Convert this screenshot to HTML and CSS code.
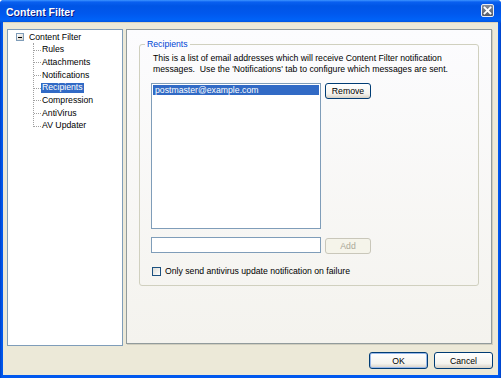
FILE: index.html
```html
<!DOCTYPE html>
<html lang="en">

<head>
    <meta charset="UTF-8">
    <title>Content Filter</title>
    <link rel="stylesheet" href="styles.css">
</head>

<body>
    <div class="window">
        <div class="titlebar">
            <span class="title">Content Filter</span>
            <span class="close">
                <svg width="13" height="13" viewBox="0 0 13 13">
                    <path d="M3.5 3.5 L9.5 9.5 M9.5 3.5 L3.5 9.5" stroke="#fff" stroke-width="1.8" stroke-linecap="square" fill="none"/>
                </svg>
            </span>
        </div>

        <div class="client">
            <div class="main">
                <ul class="tree">
                    <li class="root">
                        <div class="row"><span class="expander"></span><span class="label">Content Filter</span></div>
                        <ul class="children">
                            <li><span class="label">Rules</span></li>
                            <li><span class="label">Attachments</span></li>
                            <li><span class="label">Notifications</span></li>
                            <li><span class="label selected">Recipients</span></li>
                            <li><span class="label">Compression</span></li>
                            <li><span class="label">AntiVirus</span></li>
                            <li><span class="label">AV Updater</span></li>
                        </ul>
                    </li>
                </ul>

                <div class="page">
                    <fieldset class="group">
                        <legend>Recipients</legend>
                        <p class="desc">This is a list of email addresses which will receive Content Filter notification<br>messages.&nbsp; Use the 'Notifications' tab to configure which messages are sent.</p>

                        <div class="list-row">
                            <div class="listbox">
                                <div class="item selected">postmaster@example.com</div>
                            </div>
                            <button class="btn">Remove</button>
                        </div>

                        <div class="add-row">
                            <input class="field" type="text">
                            <button class="btn" disabled>Add</button>
                        </div>

                        <label class="check"><span class="box"></span>Only send antivirus update notification on failure</label>
                    </fieldset>
                </div>
            </div>

            <div class="footer">
                <button class="btn default">OK</button>
                <button class="btn">Cancel</button>
            </div>
        </div>
    </div>
</body>

</html>
```

FILE: styles.css
```css
body {
    margin: 0;
    width: 501px;
    height: 378px;
    overflow: hidden;
    background-color: #fff;
    font-family: "Liberation Sans", Arial, sans-serif;
    font-size: 8.7px;
    color: #000;
}

.window {
    height: 378px;
    display: flex;
    flex-direction: column;
    background: linear-gradient(to right, #0041c6, #0058ee 2px, #0058ee 499px, #0041c6);
    border-radius: 4px 4px 0 0;
}

/* title bar */
.titlebar {
    height: 23px;
    flex: none;
    box-sizing: border-box;
    display: flex;
    align-items: flex-start;
    justify-content: space-between;
    padding: 4px 7px 0 6px;
    border-radius: 4px 4px 0 0;
    background: linear-gradient(to bottom, #3d95ff 0, #0a60f0 2px, #0055e5 6px, #0058ee 60%, #0062f7 85%, #0050d8 100%);
}

.title {
    margin-top: 2px;
    color: #fff;
    font-weight: bold;
    font-size: 10.5px;
    line-height: 13px;
    text-shadow: 1px 1px 0 #0a1883;
}

.close {
    width: 13px;
    height: 13px;
    box-sizing: border-box;
    display: flex;
    align-items: center;
    justify-content: center;
    border: 1px solid #e8ecf5;
    border-radius: 2px;
    background: linear-gradient(to bottom, #858c99, #545b69);
}

.close svg {
    display: block;
    margin: -1px;
}

/* client area */
.client {
    flex: 1;
    margin: -1px 3px 3px;
    padding: 6px 5px 0 4px;
    background-color: #ece9d8;
    border-top: 1px solid #d8d2bd;
}

.main {
    display: flex;
    align-items: flex-start;
    gap: 3px;
}

/* tree */
.tree {
    list-style: none;
    margin: 0;
    width: 116px;
    height: 317px;
    box-sizing: border-box;
    padding: 1px 0 0 8px;
    background-color: #fff;
    border: 1px solid #7f9db9;
}

.tree ul {
    list-style: none;
    margin: 0;
}

.row,
.children li {
    height: 12.7px;
    display: flex;
    align-items: center;
    white-space: nowrap;
}

.expander {
    width: 8px;
    height: 8px;
    box-sizing: border-box;
    margin-right: 4px;
    border: 1px solid #7f9db9;
    background: linear-gradient(to bottom right, #fff, #d4d0c8);
    display: flex;
    align-items: center;
    justify-content: center;
}

.expander::after {
    content: "";
    width: 4px;
    height: 1px;
    background-color: #000;
}

.label {
    padding: 0 1px;
    line-height: 9.5px;
}

.label.selected {
    background-color: #316ac5;
    color: #fff;
}

.children {
    position: relative;
    padding: 0 0 0 17px;
}

.children::before {
    content: "";
    position: absolute;
    left: 17px;
    top: -1px;
    bottom: 6px;
    border-left: 1px dotted #a0a0a0;
}

.children li {
    position: relative;
    padding-left: 8px;
}

.children li::before {
    content: "";
    position: absolute;
    left: 1px;
    top: 6px;
    width: 7px;
    border-top: 1px dotted #a0a0a0;
}

/* property page */
.page {
    width: 366px;
    height: 315px;
    box-sizing: border-box;
    border: 1px solid #919b9c;
    box-shadow: 1px 1px 0 #d0cebf;
    background: linear-gradient(to bottom, #fcfcfe, #f4f3ee);
    padding-top: 9px;
}

.group {
    margin: 0 12px;
    min-width: 0;
    padding: 4px 11px 9px;
    border: 1px solid #d0d0bf;
    border-radius: 3px;
}

.group legend {
    margin-left: -6px;
    padding: 0 2px;
    line-height: 10.4px;
    color: #0046d5;
}

.desc {
    margin: 0 0 9px;
    padding-left: 2px;
    line-height: 10.4px;
    white-space: nowrap;
}

.list-row,
.add-row {
    display: flex;
    align-items: flex-start;
    gap: 4px;
}

.listbox {
    width: 170px;
    height: 146px;
    box-sizing: border-box;
    padding: 1px;
    background-color: #fff;
    border: 1px solid #7f9db9;
}

.item {
    height: 10px;
    line-height: 10px;
    padding-left: 2px;
}

.item.selected {
    background-color: #316ac5;
    color: #fff;
}

.add-row {
    margin-top: 8px;
}

.field {
    width: 170px;
    height: 16px;
    box-sizing: border-box;
    margin: 0;
    padding: 0 2px;
    border: 1px solid #7f9db9;
    background-color: #fff;
    font: inherit;
}

.add-row .btn {
    margin-top: 1px;
}

/* buttons */
.btn {
    width: 46px;
    height: 16px;
    box-sizing: border-box;
    margin: 0;
    padding: 0;
    font: inherit;
    color: #000;
    border: 1px solid #003c74;
    border-radius: 3px;
    background: linear-gradient(to bottom, #fff, #f4f3ee 70%, #d6d0c5);
}

.btn:disabled {
    color: #aca899;
    border-color: #c9c7ba;
    background: #f5f4ea;
}

.check {
    margin-top: 12px;
    display: flex;
    align-items: center;
    gap: 4px;
    padding-left: 1px;
    line-height: 10px;
}

.box {
    width: 9px;
    height: 9px;
    box-sizing: border-box;
    border: 1px solid #1c5180;
    background: linear-gradient(to bottom right, #dcdcd7, #fff);
}

/* footer */
.footer {
    margin-top: 6px;
    display: flex;
    justify-content: flex-end;
    gap: 6px;
}

.footer .btn {
    width: 59px;
    height: 17px;
}

.btn.default {
    box-shadow: inset 0 0 0 1px #98b8ea;
}
```
